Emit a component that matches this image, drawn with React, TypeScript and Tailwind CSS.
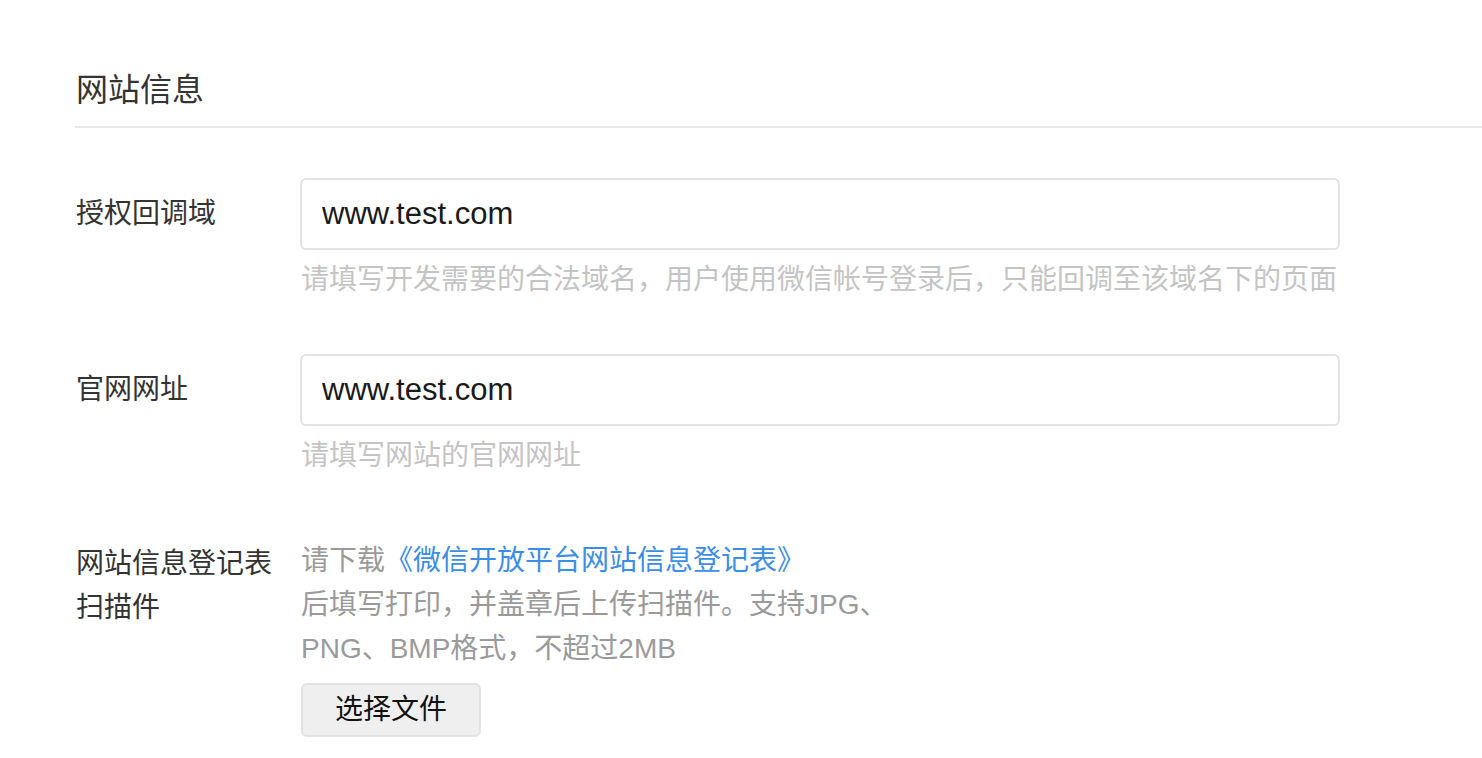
import React from "react";

const font = {
  fontFamily: '"Liberation Sans", "Noto Sans CJK SC", sans-serif',
};

interface FieldRowProps {
  label: string;
  value: string;
  hint: string;
}

function FieldRow({ label, value, hint }: FieldRowProps) {
  return (
    <div className="flex items-start">
      <div className="w-[225px] shrink-0 pl-[1px] text-[28px] leading-[72px] text-[#333333]">
        {label}
      </div>
      <div className="flex flex-col">
        <input
          readOnly
          value={value}
          className="h-[72px] w-[1040px] rounded-[6px] border-2 border-[#e3e3e3] bg-white pl-[20px] text-[31px] text-[#1a1a1a] outline-none"
          style={font}
        />
        <div className="mt-[10px] pl-[1px] text-[28px] leading-[40px] text-[#c4c4c4]">{hint}</div>
      </div>
    </div>
  );
}

export default function App() {
  return (
    <div className="min-h-screen bg-white pt-[66px] pl-[75px]" style={font}>
      {/* Section title */}
      <div className="border-b-2 border-[#e8e8e8] pb-[12px] pl-[1px] text-[32px] leading-[48px] text-[#333333]">
        网站信息
      </div>

      <div className="mt-[50px] flex flex-col">
        <FieldRow
          label="授权回调域"
          value="www.test.com"
          hint="请填写开发需要的合法域名，用户使用微信帐号登录后，只能回调至该域名下的页面"
        />
        <div className="mt-[54px]">
          <FieldRow label="官网网址" value="www.test.com" hint="请填写网站的官网网址" />
        </div>

        {/* Upload row */}
        <div className="mt-[63px] flex items-start">
          <div className="w-[225px] shrink-0 pl-[1px] pt-[3px] text-[28px] leading-[44px] text-[#333333]">
            网站信息登记表
            <br />
            扫描件
          </div>
          <div className="flex flex-col items-start pl-[1px]">
            <div className="text-[28px] leading-[44px] text-[#9a9a9a]">
              请下载<a className="text-[#3b8ee6]">《微信开放平台网站信息登记表》</a>
            </div>
            <div className="text-[28px] leading-[44px] text-[#9a9a9a]">
              后填写打印，并盖章后上传扫描件。支持JPG、
              <br />
              PNG、BMP格式，不超过2MB
            </div>
            <button className="mt-[12px] h-[54px] w-[180px] rounded-[6px] border-2 border-[#e3e3e3] bg-[#efefef] text-[28px] text-[#111111]">
              选择文件
            </button>
          </div>
        </div>
      </div>
    </div>
  );
}
